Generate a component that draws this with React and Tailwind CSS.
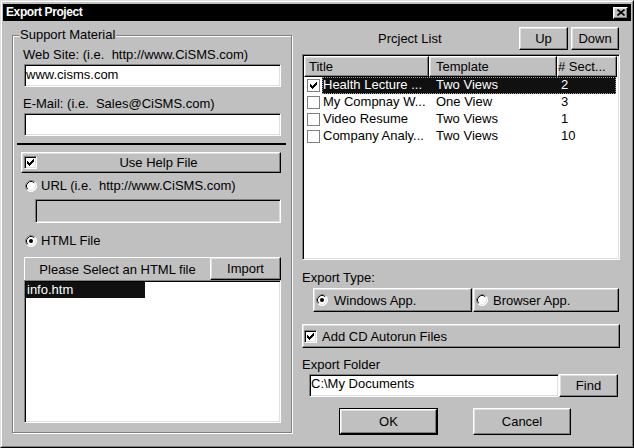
import React from "react";

// Win95 bevels
const raised =
  "border border-t-white border-l-white border-r-black border-b-black shadow-[inset_-1px_-1px_0_#808080,inset_1px_1px_0_#dfdfdf]";
const sunken =
  "border border-t-[#808080] border-l-[#808080] border-r-white border-b-white shadow-[inset_1px_1px_0_#000,inset_-1px_-1px_0_#dfdfdf]";

function Radio({ on }) {
  return (
    <svg width="12" height="12" viewBox="0 0 12 12" className="shrink-0">
      <circle cx="6" cy="6" r="5.5" fill="#fff" />
      <path d="M2.11 9.89 A5.5 5.5 0 0 1 9.89 2.11" fill="none" stroke="#808080" strokeWidth="1" />
      <path d="M9.89 2.11 A5.5 5.5 0 0 1 2.11 9.89" fill="none" stroke="#fff" strokeWidth="1" />
      <path d="M2.82 9.18 A4.5 4.5 0 0 1 9.18 2.82" fill="none" stroke="#000" strokeWidth="1" />
      <path d="M9.18 2.82 A4.5 4.5 0 0 1 2.82 9.18" fill="none" stroke="#dfdfdf" strokeWidth="1" />
      {on && <circle cx="6" cy="6" r="2" fill="#000" />}
    </svg>
  );
}

function Tick() {
  return (
    <svg width="9" height="9" viewBox="0 0 9 9" shapeRendering="crispEdges" className="block">
      <rect x="7" y="1" width="1" height="1" />
      <rect x="6" y="2" width="2" height="1" />
      <rect x="1" y="3" width="1" height="1" />
      <rect x="5" y="3" width="3" height="1" />
      <rect x="1" y="4" width="2" height="1" />
      <rect x="4" y="4" width="3" height="1" />
      <rect x="1" y="5" width="5" height="1" />
      <rect x="2" y="6" width="3" height="1" />
      <rect x="3" y="7" width="1" height="1" />
    </svg>
  );
}

function Check({ on }) {
  return (
    <span className={`w-[13px] h-[13px] shrink-0 bg-white flex items-center justify-center ${sunken}`}>
      {on && <Tick />}
    </span>
  );
}

function FlatCheck({ on }) {
  return (
    <span className="w-[13px] h-[13px] shrink-0 bg-white border border-[#808080] flex items-center justify-center">
      {on && <Tick />}
    </span>
  );
}

const projects = [
  { title: "Health Lecture ...", template: "Two Views", sections: "2", on: true, sel: true },
  { title: "My Compnay W...", template: "One View", sections: "3" },
  { title: "Video Resume", template: "Two Views", sections: "1" },
  { title: "Company Analy...", template: "Two Views", sections: "10" },
];

export default function App() {
  return (
    <div className="w-[634px] h-[448px] bg-[#c0c0c0] font-['Liberation_Sans',Arial,sans-serif] text-[13px] leading-[15px] text-black border border-t-[#dfdfdf] border-l-[#dfdfdf] border-r-black border-b-black">
      <div className="h-full flex flex-col pt-[2px] px-[1px] border border-t-white border-l-white border-r-[#808080] border-b-[#808080]">
        {/* title bar */}
        <div className="h-[17px] shrink-0 bg-black flex items-center pl-[3px] pr-[3px]">
          <span className="text-white font-bold text-[12px] tracking-[-0.4px]">Export Project</span>
          <div className={`ml-auto w-[15px] h-[12px] bg-[#c0c0c0] flex items-center justify-center ${raised}`}>
            <svg width="8" height="7" viewBox="0 0 8 7">
              <path d="M0.5 0.5 L7.5 6.5 M7.5 0.5 L0.5 6.5" stroke="#000" strokeWidth="1.6" />
            </svg>
          </div>
        </div>

        <div className="flex">
          {/* Support Material group */}
          <div className="ml-[9px] mt-[14px] w-[280px] h-[398px] shrink-0 flex flex-col items-start border border-[#808080] shadow-[inset_1px_1px_0_#fff,1px_1px_0_#fff]">
            <div className="-mt-[9px] ml-[6px] px-[1px] bg-[#c0c0c0]">Support Material</div>

            <div className="mt-[5px] ml-[10px]">Web Site: (i.e.&nbsp; http://www.CiSMS.com)</div>
            <div className={`mt-[2px] ml-[11px] w-[257px] h-[23px] bg-white pl-[1px] pt-[2px] ${sunken}`}>
              www.cisms.com
            </div>

            <div className="mt-[9px] ml-[10px]">E-Mail: (i.e.&nbsp; Sales@CiSMS.com)</div>
            <div className={`mt-[2px] ml-[11px] w-[257px] h-[23px] bg-white ${sunken}`} />

            <div className="mt-[7px] ml-[4px] w-[269px] h-[2px] bg-black" />

            <div className={`mt-[7px] ml-[8px] w-[260px] h-[21px] flex items-center pl-[2px] ${raised}`}>
              <Check on />
              <span className="flex-1 text-center">Use Help File</span>
            </div>

            <div className="mt-[5px] ml-[12px] flex items-center gap-[4px]">
              <Radio />
              <span>URL (i.e.&nbsp; http://www.CiSMS.com)</span>
            </div>
            <div className={`mt-[6px] ml-[22px] w-[246px] h-[24px] bg-[#c0c0c0] ${sunken}`} />

            <div className="mt-[10px] ml-[12px] flex items-center gap-[4px]">
              <Radio on />
              <span>HTML File</span>
            </div>

            <div className="mt-[9px] ml-[11px] flex h-[23px]">
              <div className="w-[186px] h-full flex items-center justify-center border-t border-l border-white">
                Please Select an HTML file
              </div>
              <div className={`w-[71px] h-full flex items-center justify-center ${raised}`}>Import</div>
            </div>
            <div className={`ml-[11px] w-[257px] h-[143px] bg-white ${sunken} p-[1px]`}>
              <div className="w-[119px] h-[16px] bg-[#101010] text-white pl-[1px] leading-[16px]">info.htm</div>
            </div>
          </div>

          {/* right side */}
          <div className="ml-[10px] w-[318px] shrink-0 flex flex-col items-start">
            <div className="mt-[6px] w-full flex items-center h-[23px]">
              <span className="ml-[76px]">Prcject List</span>
              <div className={`ml-auto w-[49px] h-[23px] flex items-center justify-center ${raised}`}>Up</div>
              <div className={`ml-[3px] mr-[1px] w-[48px] h-[23px] flex items-center justify-center ${raised}`}>Down</div>
            </div>

            {/* list view */}
            <div className={`mt-[4px] w-[318px] h-[206px] bg-white p-[1px] ${sunken}`}>
              <div className="flex h-[21px]">
                <div className={`w-[125px] h-full pl-[4px] flex items-center bg-[#c0c0c0] ${raised}`}>Title</div>
                <div className={`w-[128px] h-full pl-[6px] flex items-center bg-[#c0c0c0] ${raised}`}>Template</div>
                <div className={`w-[60px] h-full pl-[0px] flex items-center bg-[#c0c0c0] ${raised}`}># Sect...</div>
              </div>
              {projects.map((p) => (
                <div key={p.title} className="flex items-center h-[17px]">
                  <span className="ml-[3px]">
                    <FlatCheck on={p.on} />
                  </span>
                  <div
                    className={`ml-[2px] w-[294px] h-full flex ${
                      p.sel
                        ? "bg-[#101010] text-white outline outline-1 outline-dotted outline-[#9a9a9a] -outline-offset-1"
                        : ""
                    }`}
                  >
                    <span className="w-[107px] pl-[1px] whitespace-nowrap overflow-hidden">{p.title}</span>
                    <span className="w-[128px] pl-[7px]">{p.template}</span>
                    <span className="pl-[4px]">{p.sections}</span>
                  </div>
                </div>
              ))}
            </div>

            <div className="mt-[10px]">Export Type:</div>
            <div className="mt-[3px] ml-[11px] flex h-[24px]">
              <div className={`w-[159px] h-full flex items-center gap-[6px] pl-[2px] ${raised}`}>
                <Radio on />
                <span>Windows App.</span>
              </div>
              <div className={`ml-[1px] w-[146px] h-full flex items-center gap-[5px] pl-[2px] ${raised}`}>
                <Radio />
                <span>Browser App.</span>
              </div>
            </div>

            <div className={`mt-[12px] w-[318px] h-[24px] flex items-center gap-[5px] pl-[1px] ${raised}`}>
              <Check on />
              <span>Add CD Autorun Files</span>
            </div>

            <div className="mt-[9px]">Export Folder</div>
            <div className="mt-[2px] ml-[7px] flex h-[23px]">
              <div className={`w-[250px] h-full bg-white pl-[1px] pt-[1px] ${sunken}`}>C:\My Documents</div>
              <div className={`w-[59px] h-full flex items-center justify-center ${raised}`}>Find</div>
            </div>

            <div className="mt-[11px] ml-[37px] flex h-[27px]">
              <div className="w-[99px] h-full border border-black">
                <div className={`w-full h-full flex items-center justify-center ${raised}`}>OK</div>
              </div>
              <div className={`ml-[35px] w-[98px] h-full flex items-center justify-center ${raised}`}>Cancel</div>
            </div>
          </div>
        </div>
      </div>
    </div>
  );
}
